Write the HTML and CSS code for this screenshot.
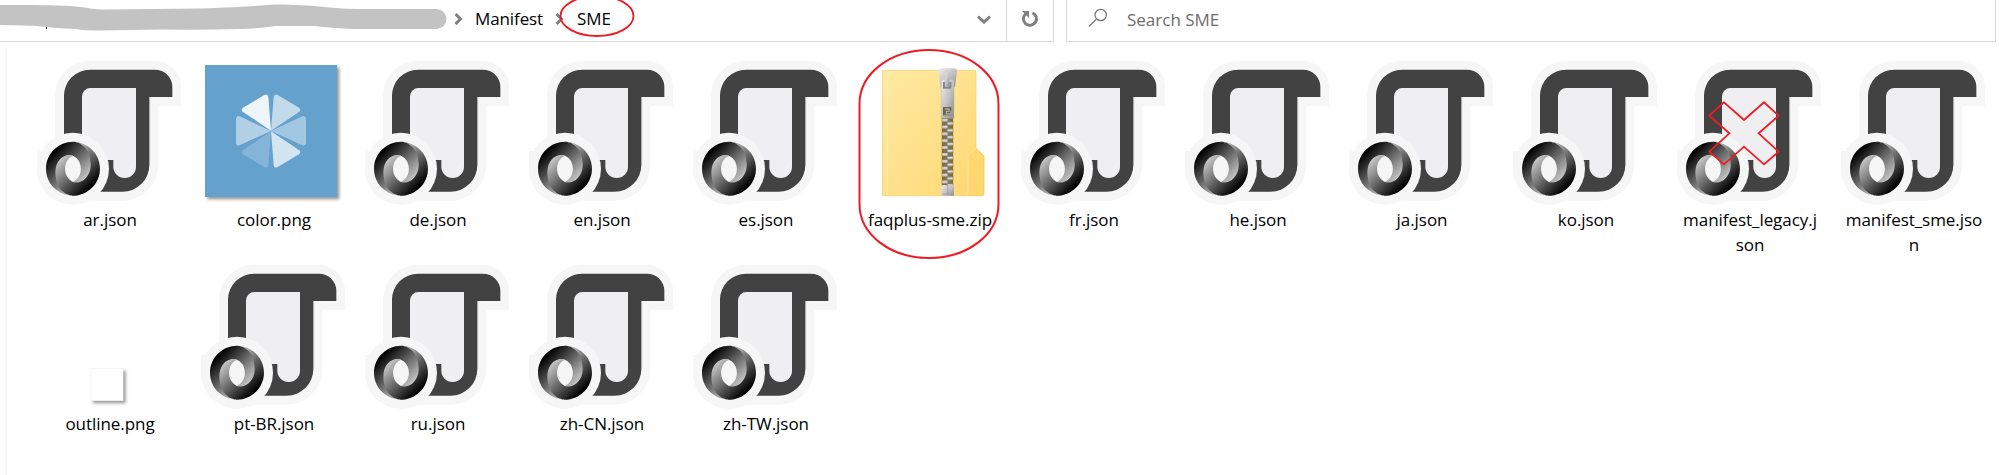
FILE: index.html
```html
<!DOCTYPE html>
<html lang="en">
<head>
<meta charset="utf-8">
<title>SME</title>
<link rel="stylesheet" href="styles.css">
</head>
<body>
<svg class="defs" width="0" height="0" aria-hidden="true">
  <defs>
    <linearGradient id="ringA" gradientUnits="userSpaceOnUse" x1="26" y1="27" x2="119" y2="120"><stop offset="0" stop-color="#000"/><stop offset="1" stop-color="#d4d4d4"/></linearGradient>
    <linearGradient id="ringB" gradientUnits="userSpaceOnUse" x1="134" y1="133" x2="41" y2="40"><stop offset="0" stop-color="#000"/><stop offset="1" stop-color="#d4d4d4"/></linearGradient>
    <linearGradient id="folder" x1="0" y1="0" x2="1" y2="1"><stop offset="0" stop-color="#ffe9a2"/><stop offset=".5" stop-color="#ffe18c"/><stop offset="1" stop-color="#ffd670"/></linearGradient>
    <linearGradient id="metal" x1="0" y1="0" x2="1" y2="1"><stop offset="0" stop-color="#eee"/><stop offset=".5" stop-color="#c4c4c4"/><stop offset="1" stop-color="#8e8e8e"/></linearGradient>
    <linearGradient id="tooth" x1="0" y1="0" x2="0" y2="1"><stop offset="0" stop-color="#fff"/><stop offset="1" stop-color="#a9a9a9"/></linearGradient>
    <pattern id="teeth" patternUnits="userSpaceOnUse" x="290" y="236" width="35" height="20.6">
      <rect width="35" height="20.6" fill="#806f39"/>
      <rect x="1" y="1" width="17" height="8" fill="url(#tooth)"/>
      <rect x="17" y="11" width="17" height="8" fill="url(#tooth)"/>
      <rect x="18" y="4" width="9" height="6" fill="#777"/>
      <rect x="8" y="14" width="9" height="6" fill="#777"/>
    </pattern>
    <symbol id="json" viewBox="-6 12 492 444">
      <path fill="#f6f6f6" d="M75 260V122A105 105 0 0 1 180 17H375A78 78 0 0 1 453 96V153H385V330A107 107 0 0 1 278 437H178A108 108 0 0 1 21 341V288H35Q50 260 75 248Z"/>
      <path fill="#efeff1" d="M156 99H320V340A34 34 0 0 1 250 340L220 300H156Z"/>
      <path fill="#424242" d="M102 250V122A78 78 0 0 1 180 44H375A52 52 0 0 1 427 96V126H358V330A80 80 0 0 1 278 410H200V315H250V336A34 33 0 0 0 318 336V99H181A25 25 0 0 0 156 124V250Z"/>
      <path fill="none" stroke="#a8a8a8" stroke-width="2" d="M359 127V330"/>
      <circle cx="129" cy="341" r="108" fill="#f6f6f6"/>
      <g transform="translate(48 260) scale(1.0125)">
        <path fill="url(#ringA)" d="M79.865 119.1c35.397 48.255 70.04-13.469 69.988-50.587C149.794 24.626 105.36.1 79.836.1 38.943.1.1 33.895.1 80.134c0 51.392 44.64 79.865 79.736 79.865-7.941-1.144-34.41-6.814-34.766-67.967-.239-41.347 13.489-57.866 34.805-50.599.477.177 23.514 9.264 23.514 38.95.001 29.56-23.524 38.717-23.524 38.717z"/>
        <path fill="url(#ringB)" d="M79.823 41.4C56.433 33.339 27.78 52.618 27.78 91.23c0 63.048 46.721 68.77 52.384 68.77 40.894 0 79.736-33.795 79.736-80.033C159.9 28.574 115.26.1 80.164.1c9.72-1.346 52.392 10.52 52.392 69.03 0 38.156-31.965 58.943-52.592 50.034-.477-.176-23.514-9.264-23.514-38.949 0-29.56 23.373-38.814 23.373-38.814z"/>
      </g>
    </symbol>
  </defs>
</svg>

<header class="toolbar">
  <div class="address">
    <svg class="redaction" width="450" height="34" viewBox="0 0 450 34">
      <path stroke="#222" d="M0 24.5h1M46.500 25v4M83.500 25v4M367 28.500h2M405 28.500h2M411 28.500h2"/>
      <path fill="#c3c3c3" d="M0 5H30Q70 5 85 7.500Q98 10 105 9.500L200 8.500Q240 7 255 6Q270 4 282 4.500Q310 5 330 7.500Q345 9 360 9H436.500A10 10 0 0 1 436.500 29H355Q330 28 315 26H275Q255 29 240 29Q200 30 160 29.500L100 30.500Q85 30.500 75 29Q55 28 42 26.500Q25 25 0 25Z"/>
    </svg>
    <svg class="crumb-arrow" width="9" height="12" viewBox="0 0 9 12"><path d="M1.500 1L6.500 6L1.500 11"/></svg>
    <span class="crumb crumb-manifest">Manifest</span>
    <svg class="crumb-arrow" width="9" height="12" viewBox="0 0 9 12"><path d="M1.500 1L6.500 6L1.500 11"/></svg>
    <span class="crumb crumb-sme">SME</span>
    <svg class="mark-sme" width="78" height="42" viewBox="0 -5 78 42"><ellipse cx="39" cy="16" rx="36.500" ry="20"/></svg>
    <svg class="dropdown" width="14" height="9" viewBox="0 0 14 9"><path d="M1 1.500L7 7L13 1.500"/></svg>
  </div>
  <div class="refresh">
    <svg width="18" height="18" viewBox="0 0 18 18"><path d="M11.500 2.800A6.500 6.500 0 1 1 4.500 4" fill="none" stroke="#808080" stroke-width="3"/><path d="M1 1H8V8Z" fill="#808080"/></svg>
  </div>
  <div class="search">
    <svg width="20" height="20" viewBox="0 0 20 20"><circle cx="12.700" cy="7" r="5.700"/><path d="M8.500 11L1 18.500"/></svg>
    <span class="hint">Search SME</span>
  </div>
</header>

<main class="files">
  <div class="file"><svg class="icon"><use href="#json"/></svg><span class="name">ar.json</span></div>
  <div class="file">
    <svg class="icon" viewBox="-9 12 492 444">
      <rect class="shadowed" x="30" y="30" width="396" height="396" fill="#64a1cc"/>
      <path fill="#eef6fb" d="M220 126L228 227L143 170Q137 163 144 158L208 120Q219 115 220 126Z"/>
      <path fill="#c1dbec" d="M236 126L228 227L313 170Q319 163 312 158L248 120Q237 115 236 126Z"/>
      <path fill="#b1cfe5" d="M123 191Q125 180 134 184L228 228L134 271Q124 274 123 265Z"/>
      <path fill="#a2c7e1" d="M333 191Q331 180 322 184L228 228L322 271Q332 274 333 265Z"/>
      <path fill="#84b4d7" d="M220 330L228 229L143 286Q137 293 144 298L208 336Q219 341 220 330Z"/>
      <path fill="#d2e5f1" d="M236 330L228 229L313 286Q319 293 312 298L248 336Q237 341 236 330Z"/>
    </svg>
    <span class="name">color.png</span>
  </div>
  <div class="file"><svg class="icon"><use href="#json"/></svg><span class="name">de.json</span></div>
  <div class="file"><svg class="icon"><use href="#json"/></svg><span class="name">en.json</span></div>
  <div class="file"><svg class="icon"><use href="#json"/></svg><span class="name">es.json</span></div>
  <div class="file">
    <svg class="icon" viewBox="9 57 492 444">
      <path d="M112 91H388Q393 91 393 96V324L417 348V461Q417 467 411 467H112Z" fill="url(#folder)" stroke="#f2cf69" stroke-width="2"/>
      <path d="M126 92V466" stroke="#ffefb8" stroke-width="3"/>
      <path d="M369 460V348L393 325L416 348V461Q416 466 411 466H363Q369 466 369 460Z" fill="#ffd872" stroke="#f2cb62" stroke-width="2"/>
      <path d="M363 466Q369 466 369 458V348L393 325" fill="none" stroke="#ffe8a5" stroke-width="3"/>
      <rect x="290" y="230" width="35" height="210" fill="url(#teeth)"/>
      <path d="M280 92Q281 85 290 85H326Q335 85 336 92L330 142H286Z" fill="url(#metal)"/>
      <path d="M289 126Q289 118 296 118H320Q327 118 327 126V234H288Z" fill="url(#metal)" stroke="#aaa"/>
      <rect x="294" y="126" width="25" height="20" fill="#858585"/>
      <path d="M300 140V101Q300 95 307 95Q313 95 313 101V140Z" fill="url(#metal)" stroke="#bbb"/>
      <rect x="294" y="201" width="25" height="25" fill="#69613f"/>
      <path d="M299 207H312V214H304V222H318V213" fill="none" stroke="#aaa" stroke-width="4"/>
      <path d="M289 467V439Q290 435 296 435H304L308 440L312 435H320Q327 436 327 441V467Z" fill="url(#metal)"/>
      <path d="M308 439V462H293M308 462H324" fill="none" stroke="#999" stroke-width="2"/>
    </svg>
    <span class="name">faqplus-sme.zip</span>
    <svg class="mark-zip" width="142" height="212" viewBox="0 0 142 212"><path d="M1.500 56C1.500 25 33 2 71 2S140.500 25 140.500 56V156C140.500 187 109 210 71 210S1.500 187 1.500 156Z"/></svg>
  </div>
  <div class="file"><svg class="icon"><use href="#json"/></svg><span class="name">fr.json</span></div>
  <div class="file"><svg class="icon"><use href="#json"/></svg><span class="name">he.json</span></div>
  <div class="file"><svg class="icon"><use href="#json"/></svg><span class="name">ja.json</span></div>
  <div class="file"><svg class="icon"><use href="#json"/></svg><span class="name">ko.json</span></div>
  <div class="file">
    <svg class="icon"><use href="#json"/></svg><span class="name">manifest_legacy.j<br>son</span>
    <svg class="mark-cross" viewBox="-6 12 492 444"><path d="M162 142L222 195L282 142L326 182L266 235L326 290L282 328L222 275L162 328L118 290L178 235L118 182Z"/></svg>
  </div>
  <div class="file"><svg class="icon"><use href="#json"/></svg><span class="name">manifest_sme.jso<br>n</span></div>

  <div class="file"><svg class="icon" viewBox="84 9 492 444"><rect class="shadowed" x="273" y="326" width="96" height="96" fill="#fefefe" stroke="#f2f2f2" stroke-width="2"/></svg><span class="name">outline.png</span></div>
  <div class="file"><svg class="icon"><use href="#json"/></svg><span class="name">pt-BR.json</span></div>
  <div class="file"><svg class="icon"><use href="#json"/></svg><span class="name">ru.json</span></div>
  <div class="file"><svg class="icon"><use href="#json"/></svg><span class="name">zh-CN.json</span></div>
  <div class="file"><svg class="icon"><use href="#json"/></svg><span class="name">zh-TW.json</span></div>
</main>
</body>
</html>
```

FILE: styles.css
```css
* { box-sizing: border-box; }
body {
  margin: 0;
  height: 475px;
  overflow: hidden;
  background: #fff;
  color: #000;
  font: 17px/25px "Open Sans", "Noto Sans", sans-serif;
}
.defs { position: absolute; }
.toolbar { display: flex; height: 42px; }
.address {
  position: relative;
  display: flex;
  align-items: center;
  width: 1006px;
  padding-bottom: 3px;
  border-bottom: 1px solid #d9d9d9;
}
.redaction { flex: none; align-self: flex-start; margin-right: 4px; }
.crumb-arrow { flex: none; fill: none; stroke: #808080; stroke-width: 3; }
.crumb { flex: none; padding-bottom: 2px; white-space: nowrap; }
.crumb-manifest { width: 80px; margin-left: 12px; letter-spacing: -.1px; }
.crumb-sme { margin-left: 13px; }
.mark-sme { position: absolute; left: 558px; top: -5px; fill: none; stroke: #ed1c24; stroke-width: 1.8; }
.dropdown { margin-left: auto; margin-right: 15px; fill: none; stroke: #808080; stroke-width: 3; }
.refresh {
  display: flex;
  align-items: center;
  justify-content: center;
  width: 48px;
  padding-bottom: 3px;
  border: solid #d9d9d9;
  border-width: 0 1px 1px;
}
.search {
  display: flex;
  align-items: center;
  width: 930px;
  margin-left: 12px;
  padding: 0 0 3px 21px;
  border: solid #d9d9d9;
  border-width: 0 1px 1px;
}
.search svg { margin-bottom: 3px; fill: none; stroke: #777; stroke-width: 1.2; }
.hint { margin-left: 19px; color: #6d6d6d; }
.files {
  display: grid;
  grid-template-columns: repeat(12, 164px);
  grid-auto-rows: 204px;
  height: 426px;
  margin: 7px 0 0 5px;
  padding: 10px 0 0 21px;
  border-left: 2px solid #f6f6f6;
}
.file { position: relative; display: flex; flex-direction: column; align-items: center; }
.icon { display: block; flex: none; width: 164px; height: 148px; }
.name { text-align: center; white-space: nowrap; letter-spacing: -.05px; }
.shadowed { filter: drop-shadow(7px 7px 4px rgba(0, 0, 0, .4)); }
.mark-zip { position: absolute; left: 10px; top: -11px; fill: none; stroke: #ed1c24; stroke-width: 2; }
.mark-cross { position: absolute; left: 0; top: 0; width: 164px; height: 148px; fill: none; stroke: #ed1c24; stroke-width: 5.5; }
```
